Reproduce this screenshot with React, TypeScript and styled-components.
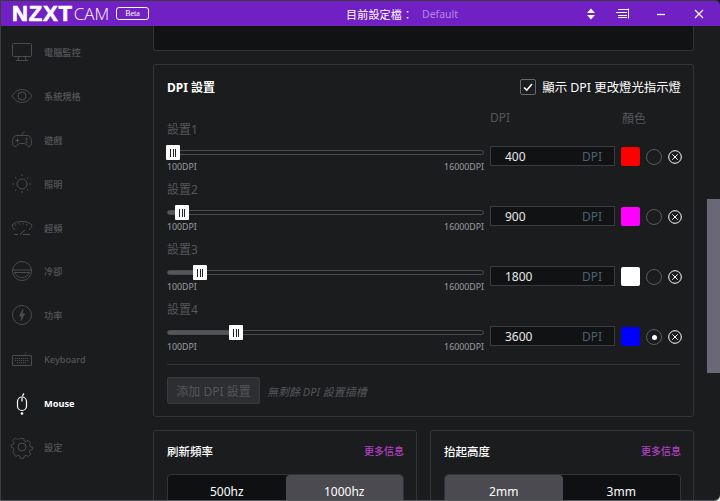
import React from 'react'
import styled, { createGlobalStyle } from 'styled-components'

const FONT = `"Noto Sans", "Noto Sans CJK TC", sans-serif`

const GlobalStyle = createGlobalStyle`
  html, body {
    margin: 0;
    padding: 0;
    background: #e8e8e8;
  }
  * {
    box-sizing: border-box;
  }
`

const IconBase = ({ children, stroke = '#4b4c4f', size = 24, weight = 1 }: any) => (
  <svg width={size} height={size} viewBox='0 0 24 24' fill='none' stroke={stroke} strokeWidth={weight}>
    {children}
  </svg>
)

const navItems: any[] = [
  {
    label: '電腦監控',
    icon: (
      <IconBase>
        <rect x='2.5' y='3.5' width='19' height='13' rx='1' />
        <path d='M9 16.5 8 20M15 16.5l1 3.5M6 20.5h12' />
      </IconBase>
    )
  },
  {
    label: '系統規格',
    icon: (
      <IconBase>
        <path d='M2 12c3-4.600 6.500-6.500 10-6.500S19 7.400 22 12c-3 4.600-6.500 6.500-10 6.500S5 16.600 2 12Z' />
        <circle cx='12' cy='12' r='4' />
      </IconBase>
    )
  },
  {
    label: '遊戲',
    icon: (
      <IconBase>
        <path d='M7 7.500h10c3 0 4.500 3 4.500 6.500 0 3-1 4.500-2.500 4.500-2 0-3-3-4.500-3h-5C8 15.500 7 18.500 5 18.500c-1.500 0-2.500-1.500-2.500-4.500C2.500 10.500 4 7.500 7 7.500Z' />
        <path d='M7.500 10.500v4M5.500 12.500h4M12 7.500c0-2 1-3 2.500-4' />
        <circle cx='16.500' cy='11' r='.8' />
        <circle cx='16.500' cy='14' r='.8' />
      </IconBase>
    )
  },
  {
    label: '照明',
    icon: (
      <IconBase>
        <circle cx='12' cy='12' r='5' />
        <path d='M12 2v3M12 19v3M2 12h3M19 12h3M5 5l2 2M17 17l2 2M5 19l2-2M17 7l2-2' strokeDasharray='2 1' />
      </IconBase>
    )
  },
  {
    label: '超頻',
    icon: (
      <IconBase>
        <path d='M2 9c2.500-2.500 6-3.500 10-3.500S19.500 6.500 22 9c-.5 2-1.500 3.500-3 5' />
        <path d='M2 9c.5 2 1.500 3.500 3 5M5 8.500l1 1.500M9 7l.5 1.500M13 7v1.500M17 8l-.5 1.500' />
        <path d='M10 18.500l5-4.500M4 18.500h4M13 18.500h7' />
      </IconBase>
    )
  },
  {
    label: '冷卻',
    icon: (
      <IconBase>
        <circle cx='12' cy='12' r='9.500' />
        <path d='M2.500 11h19M4.500 13.500c1 3 4 5 7.500 5s6.500-2 7.500-5h-15Z' />
      </IconBase>
    )
  },
  {
    label: '功率',
    icon: (
      <IconBase>
        <circle cx='12' cy='12' r='9.500' />
        <path d='M13 6.500 9.500 13H12l-1 4.500 3.500-6.500H12l1-4.500Z' fill='#4b4c4f' />
      </IconBase>
    )
  },
  {
    label: 'Keyboard',
    icon: (
      <IconBase>
        <rect x='2.500' y='8.500' width='19' height='10' rx='.5' />
        <path d='M15 8.500c0-2 1-3 2-4M5 11.500h14M5 13.500h14M7 15.800h10' strokeDasharray='1.200 .8' />
      </IconBase>
    )
  },
  {
    label: 'Mouse',
    active: true,
    icon: (
      <IconBase stroke='#ffffff' weight={1.2}>
        <rect x='7.500' y='6' width='9' height='13.500' rx='4.500' />
        <path d='M12 7v3.500M12.500 5.500c.2-1.500 1-2.500 1.500-3' />
        <circle cx='12' cy='22.500' r='1.300' fill='#ffffff' stroke='none' />
      </IconBase>
    )
  },
  {
    label: '設定',
    icon: (
      <IconBase>
        <circle cx='12' cy='12' r='4' />
        <path d='M10 2.500h4l.6 2.800 1.900.8 2.400-1.500 2.800 2.800-1.500 2.400.8 1.900 2.500.3v3l-2.500.6-.8 1.900 1.500 2.400-2.800 2.800-2.400-1.500-1.900.8-.6 2.500h-4l-.6-2.500-1.900-.8-2.400 1.500L1.700 17.400l1.500-2.400-.8-1.900L0 12.500v-3l2.400-.3.800-1.900L1.700 4.900l2.800-2.800 2.400 1.500 1.900-.8L9.400 2.500Z' transform='translate(1.200 1.200) scale(.9)' />
      </IconBase>
    )
  }
]

const dpiRows = [
  { name: '設置1', value: 400, color: '#ff0000', thumb: -2, selected: false },
  { name: '設置2', value: 900, color: '#ff00ff', thumb: 7, selected: false },
  { name: '設置3', value: 1800, color: '#ffffff', thumb: 25, selected: false },
  { name: '設置4', value: 3600, color: '#0000ff', thumb: 61, selected: true }
]

const App = () => {
  return (
    <Window>
      <GlobalStyle />
      <Header>
        <Brand>
          <Logo>NZXT</Logo>
          <Cam>CAM</Cam>
          <BetaBadge>Beta</BetaBadge>
        </Brand>
        <ProfileLabel>目前設定檔：</ProfileLabel>
        <ProfileValue>Default</ProfileValue>
        <HeaderIcon $width={26}>
          <svg width='10' height='12' viewBox='0 0 10 12' fill='#fff'>
            <path d='M5 .5 9 5H1ZM5 11.500 1 7H9Z' />
          </svg>
        </HeaderIcon>
        <HeaderIcon $width={38}>
          <svg width='14' height='11' viewBox='0 0 14 11' fill='none' stroke='#fff' strokeWidth='1'>
            <path d='M2 1.500h10M0 4.500h11M2 7.500h9M2 9.500h9M12.500 .5v10' />
          </svg>
        </HeaderIcon>
        <HeaderIcon $width={38}>
          <svg width='12' height='12' viewBox='0 0 12 12' fill='none' stroke='#fff' strokeWidth='1.300'>
            <path d='M2 6.500h8' />
          </svg>
        </HeaderIcon>
        <HeaderIcon $width={38}>
          <svg width='12' height='12' viewBox='0 0 12 12' fill='none' stroke='#fff' strokeWidth='1.200'>
            <path d='M2 2l8 8M10 2l-8 8' />
          </svg>
        </HeaderIcon>
      </Header>
      <Body>
        <Sidebar>
          {navItems.map((item: any, index: any) => {
            return (
              <NavItem key={index}>
                <NavIcon>{item.icon}</NavIcon>
                <NavLabel $active={item.active}>{item.label}</NavLabel>
              </NavItem>
            )
          })}
        </Sidebar>
        <Main>
          <TopStub />
          <Panel>
            <PanelHead>
              <PanelTitle>DPI 設置</PanelTitle>
              <CheckWrap>
                <CheckBox>
                  <svg width='12' height='12' viewBox='0 0 12 12' fill='none' stroke='#fff' strokeWidth='1.600'>
                    <path d='M2 6.500 4.800 9.200 10 3' />
                  </svg>
                </CheckBox>
                <CheckLabel>顯示 DPI 更改燈光指示燈</CheckLabel>
              </CheckWrap>
            </PanelHead>
            <ColumnHeads>
              <DpiHead>DPI</DpiHead>
              <ColorHead>顏色</ColorHead>
            </ColumnHeads>
            {dpiRows.map((row, index) => {
              return (
                <DpiRow key={index}>
                  <SliderColumn>
                    <RowName>{row.name}</RowName>
                    <Track>
                      <TrackFill style={{ width: Math.max(row.thumb + 4, 0) }} />
                      <Thumb style={{ left: row.thumb }}>
                        <Grip />
                        <Grip />
                        <Grip />
                      </Thumb>
                    </Track>
                    <RangeLabels>
                      <span>100DPI</span>
                      <span>16000DPI</span>
                    </RangeLabels>
                  </SliderColumn>
                  <DpiInput>
                    <DpiValue>{row.value}</DpiValue>
                    <DpiUnit>DPI</DpiUnit>
                  </DpiInput>
                  <Swatch $color={row.color} />
                  <Radio $selected={row.selected} />
                  <RemoveIcon>
                    <svg width='14' height='14' viewBox='0 0 14 14' fill='none' stroke='#fff' strokeWidth='1'>
                      <circle cx='7' cy='7' r='6.300' />
                      <path d='M4.300 4.300l5.400 5.400M9.700 4.300l-5.400 5.400' />
                    </svg>
                  </RemoveIcon>
                </DpiRow>
              )
            })}
            <Divider />
            <AddRow>
              <AddButton>添加 DPI 設置</AddButton>
              <AddHint>無剩餘 DPI 設置插槽</AddHint>
            </AddRow>
          </Panel>
          <BottomGrid>
            <SmallPanel>
              <SmallHead>
                <SmallTitle>刷新頻率</SmallTitle>
                <MoreLink>更多信息</MoreLink>
              </SmallHead>
              <Segments>
                <Segment>500hz</Segment>
                <Segment $active>1000hz</Segment>
              </Segments>
            </SmallPanel>
            <SmallPanel>
              <SmallHead>
                <SmallTitle>抬起高度</SmallTitle>
                <MoreLink>更多信息</MoreLink>
              </SmallHead>
              <Segments>
                <Segment $active>2mm</Segment>
                <Segment>3mm</Segment>
              </Segments>
            </SmallPanel>
          </BottomGrid>
        </Main>
        <ScrollTrack>
          <ScrollThumb />
        </ScrollTrack>
      </Body>
    </Window>
  )
}

export default App

const Window = styled.div`
  width: 720px;
  height: 501px;
  display: flex;
  flex-direction: column;
  overflow: hidden;
  background: #1b1c1e;
  font-family: ${FONT};
  border-left: 1px solid #3c3c3c;
  border-bottom: 1px solid #55565a;
  border-bottom-right-radius: 6px;
`
const Header = styled.div`
  height: 26px;
  flex: none;
  display: flex;
  align-items: center;
  background: #7120c4;
  border-top: 1px solid #3a3a3a;
  border-top-right-radius: 5px;
  color: #fff;
`
const Brand = styled.div`
  width: 345px;
  flex: none;
  display: flex;
  align-items: center;
  padding-left: 11px;
`
const Logo = styled.span`
  font-family: 'Liberation Sans', sans-serif;
  font-size: 22px;
  font-weight: 700;
  line-height: 24px;
  letter-spacing: 0.8px;
  -webkit-text-stroke: 0.7px #fff;
`
const Cam = styled.span`
  margin-left: 1px;
  font-family: 'Open Sans', sans-serif;
  font-size: 17px;
  font-weight: 300;
  line-height: 24px;
`
const BetaBadge = styled.span`
  margin-left: 7px;
  width: 33px;
  height: 13px;
  border: 1px solid #fff;
  border-radius: 3px;
  font-family: 'Liberation Serif', serif;
  font-size: 8px;
  line-height: 11px;
  text-align: center;
`
const ProfileLabel = styled.span`
  flex: none;
  font-size: 11px;
  width: 76px;
  letter-spacing: 0.2px;
`
const ProfileValue = styled.span`
  flex: none;
  font-size: 10.500px;
  color: #b288e6;
  width: 156px;
`
const HeaderIcon = styled.span<{ $width: number }>`
  flex: none;
  width: ${(p) => p.$width}px;
  display: flex;
  justify-content: center;
`
const Body = styled.div`
  flex: 1;
  min-height: 0;
  display: flex;
`
const Sidebar = styled.div`
  width: 152px;
  flex: none;
  display: flex;
  flex-direction: column;
  padding-top: 4px;
`
const NavItem = styled.div`
  height: 43.9px;
  flex: none;
  display: flex;
  align-items: center;
  padding-left: 9px;
`
const NavIcon = styled.span`
  width: 24px;
  height: 24px;
  display: flex;
`
const NavLabel = styled.span<{ $active?: boolean }>`
  margin-left: 10px;
  font-size: 9.200px;
  font-weight: ${(p) => (p.$active ? 700 : 500)};
  color: ${(p) => (p.$active ? '#ffffff' : '#55565a')};
`
const Main = styled.div`
  width: 541px;
  flex: none;
  display: flex;
  flex-direction: column;
`
const TopStub = styled.div`
  height: 25px;
  flex: none;
  background: #111214;
  border: 1px solid #333438;
  border-top: 0;
  border-radius: 0 0 3px 3px;
`
const Panel = styled.div`
  height: 353px;
  flex: none;
  margin-top: 13px;
  padding: 0 13px;
  border: 1px solid #333438;
  border-radius: 3px;
`
const PanelHead = styled.div`
  height: 43px;
  display: flex;
  align-items: center;
  justify-content: space-between;
`
const PanelTitle = styled.span`
  font-size: 12px;
  font-weight: 700;
  color: #fff;
`
const CheckWrap = styled.div`
  display: flex;
  align-items: center;
  gap: 6px;
  margin-right: -1px;
`
const CheckBox = styled.span`
  width: 16px;
  height: 16px;
  display: flex;
  align-items: center;
  justify-content: center;
  border: 1px solid #68696d;
  border-radius: 2px;
`
const CheckLabel = styled.span`
  font-size: 12.400px;
  color: #fff;
`
const ColumnHeads = styled.div`
  height: 17px;
  margin-top: 1px;
  display: flex;
  font-size: 12px;
  color: #55565a;
`
const DpiHead = styled.span`
  margin-left: 323px;
  width: 132px;
`
const ColorHead = styled.span``
const DpiRow = styled.div`
  height: 60px;
  display: flex;
  align-items: flex-start;
`
const SliderColumn = styled.div`
  width: 317px;
  flex: none;
`
const RowName = styled.div`
  height: 20px;
  font-size: 12px;
  line-height: 20px;
  color: #55565a;
  margin-top: -6px;
`
const Track = styled.div`
  position: relative;
  height: 5px;
  margin-top: 10px;
  border: 1px solid #4a4b4f;
  border-radius: 3px;
`
const TrackFill = styled.div`
  height: 100%;
  background: #55565a;
`
const Thumb = styled.div`
  position: absolute;
  top: -6px;
  width: 14px;
  height: 15px;
  display: flex;
  align-items: center;
  justify-content: center;
  gap: 1.700px;
  background: #fff;
  border-radius: 1px;
`
const Grip = styled.span`
  width: 1px;
  height: 8px;
  background: #222;
`
const RangeLabels = styled.div`
  margin-top: 6px;
  display: flex;
  justify-content: space-between;
  font-size: 8.800px;
  line-height: 12px;
  color: #9b9ca0;
`
const DpiInput = styled.div`
  width: 125px;
  height: 20px;
  flex: none;
  margin: 20px 0 0 6px;
  padding: 0 12px 0 14px;
  display: flex;
  align-items: center;
  justify-content: space-between;
  background: #111214;
  border: 1px solid #3a3b3f;
`
const DpiValue = styled.span`
  font-size: 12px;
  color: #e8e8e8;
`
const DpiUnit = styled.span`
  font-size: 12px;
  color: #4d6070;
`
const Swatch = styled.span<{ $color: string }>`
  width: 19px;
  height: 19px;
  flex: none;
  margin: 21px 0 0 6px;
  border-radius: 2px;
  background: ${(p) => p.$color};
`
const Radio = styled.span<{ $selected: boolean }>`
  width: 16px;
  height: 16px;
  flex: none;
  margin: 23px 0 0 6px;
  display: flex;
  align-items: center;
  justify-content: center;
  border: 1px solid #5a5b5f;
  border-radius: 50%;
  &::after {
    content: '';
    display: ${(p) => (p.$selected ? 'block' : 'none')};
    width: 5px;
    height: 5px;
    border-radius: 50%;
    background: #fff;
  }
`
const RemoveIcon = styled.span`
  width: 14px;
  height: 14px;
  flex: none;
  margin: 24px 0 0 6px;
  display: flex;
`
const Divider = styled.div`
  height: 1px;
  margin-top: -2px;
  background: #333438;
`
const AddRow = styled.div`
  margin-top: 12px;
  display: flex;
  align-items: center;
  gap: 7px;
`
const AddButton = styled.div`
  width: 93px;
  height: 27px;
  display: flex;
  align-items: center;
  justify-content: center;
  background: #2d2e31;
  border: 1px solid #38393c;
  border-radius: 2px;
  font-size: 12px;
  color: #55565a;
`
const AddHint = styled.span`
  font-size: 11px;
  font-style: italic;
  color: #55565a;
`
const BottomGrid = styled.div`
  margin-top: 13px;
  display: grid;
  grid-template-columns: 264px 264px;
  column-gap: 13px;
`
const SmallPanel = styled.div`
  height: 120px;
  padding: 0 12px 0 13px;
  border: 1px solid #333438;
  border-radius: 3px;
`
const SmallHead = styled.div`
  height: 43px;
  padding-bottom: 4px;
  display: flex;
  align-items: center;
  justify-content: space-between;
`
const SmallTitle = styled.span`
  font-size: 11.500px;
  font-weight: 500;
  color: #fff;
`
const MoreLink = styled.span`
  font-size: 10px;
  font-weight: 500;
  color: #b43fc4;
`
const Segments = styled.div`
  height: 40px;
  display: grid;
  grid-template-columns: 1fr 1fr;
  background: #0f1012;
  border: 1px solid #333438;
  border-radius: 4px;
`
const Segment = styled.div<{ $active?: boolean }>`
  display: flex;
  align-items: center;
  justify-content: center;
  padding-bottom: 6px;
  font-size: 12px;
  color: #fff;
  border-radius: 4px;
  background: ${(p) => (p.$active ? '#4b4a50' : 'transparent')};
`
const ScrollTrack = styled.div`
  flex: 1;
  display: flex;
  justify-content: flex-end;
`
const ScrollThumb = styled.div`
  width: 13px;
  height: 174px;
  margin-top: 173px;
  background: #6a6876;
`
